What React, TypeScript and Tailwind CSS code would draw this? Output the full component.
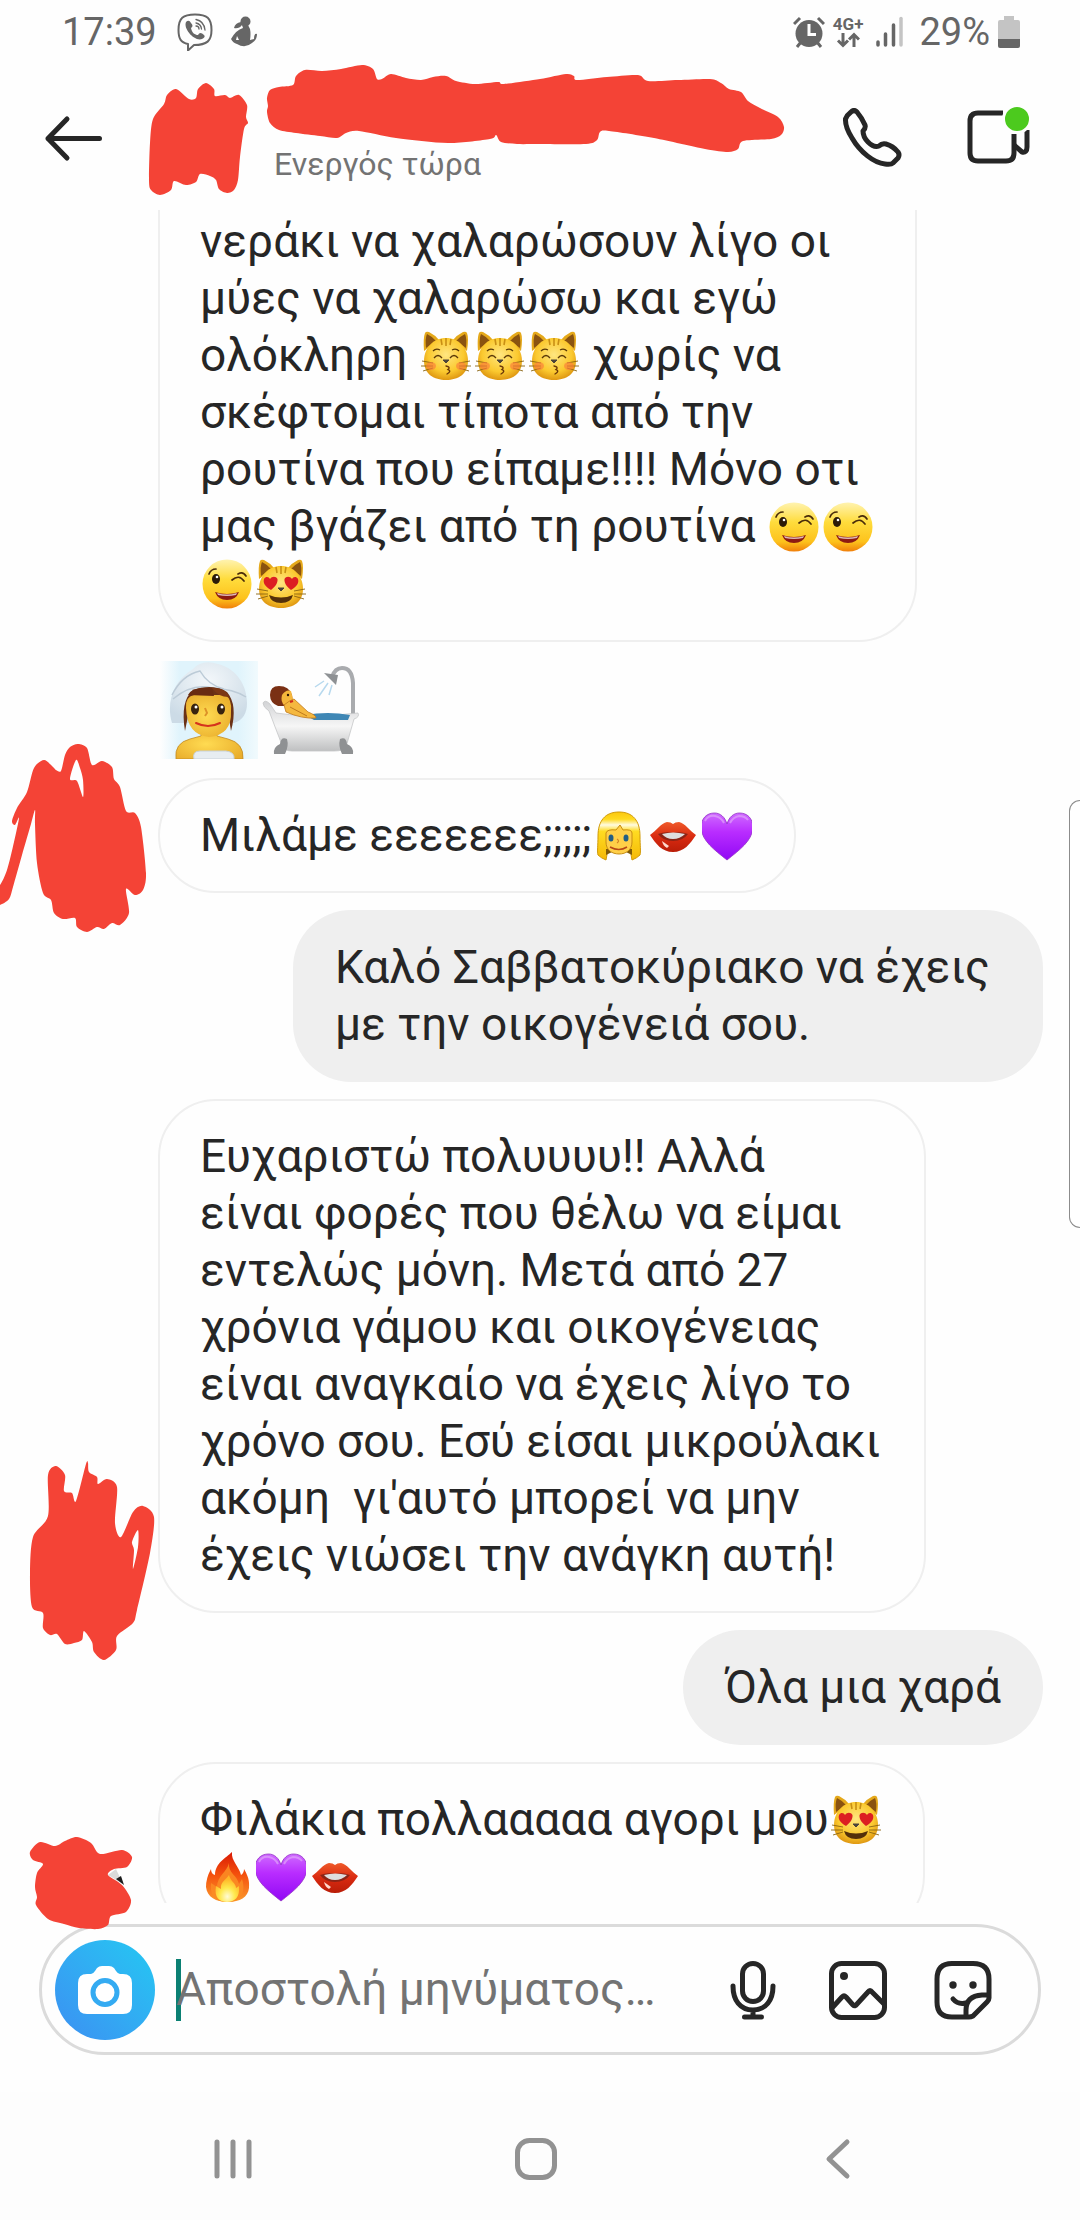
import type { ReactNode } from 'react';

type Point = [number, number];

interface Message {
  from: 'me' | 'them';
  text: string;
  clippedTop?: boolean;
}

const messages: Message[] = [
  {
    from: 'them',
    text: 'νεράκι να χαλαρώσουν λίγο οι\nμύες να χαλαρώσω και εγώ\nολόκληρη 😽😽😽 χωρίς να\nσκέφτομαι τίποτα από την\nρουτίνα που είπαμε!!!! Μόνο οτι\nμας βγάζει από τη ρουτίνα 😉😉\n😉😻',
    clippedTop: true,
  },
  { from: 'them', text: '🧖🛀' },
  { from: 'them', text: 'Μιλάμε εεεεεεε;;;;;👱👄💜' },
  { from: 'me', text: 'Καλό Σαββατοκύριακο να έχεις με την οικογένειά σου.' },
  {
    from: 'them',
    text: "Ευχαριστώ πολυυυυ!! Αλλά\nείναι φορές που θέλω να είμαι εντελώς μόνη. Μετά από 27 χρόνια γάμου και οικογένειας είναι αναγκαίο να έχεις λίγο το χρόνο σου. Εσύ είσαι μικρούλακι ακόμη  γι'αυτό μπορεί να μην έχεις νιώσει την ανάγκη αυτή!",
  },
  { from: 'me', text: 'Όλα μια χαρά' },
  { from: 'them', text: 'Φιλάκια πολλααααα αγορι μου😻\n🔥💜👄' },
];

/* ---------- emoji ---------- */

function EmojiDefs() {
  return (
    <svg className="absolute h-0 w-0" aria-hidden="true">
      <defs>
        <radialGradient id="cat" cx="50%" cy="40%" r="62%">
          <stop offset="0" stopColor="#ffe680" />
          <stop offset="0.65" stopColor="#fbc92f" />
          <stop offset="1" stopColor="#dd9410" />
        </radialGradient>
        <linearGradient id="face" x1="0" y1="0" x2="0" y2="1">
          <stop offset="0" stopColor="#fff3b0" />
          <stop offset="0.4" stopColor="#ffdc3c" />
          <stop offset="0.8" stopColor="#fdc21c" />
          <stop offset="1" stopColor="#f07f0a" />
        </linearGradient>
        <linearGradient id="purple" x1="0" y1="0" x2="0" y2="1">
          <stop offset="0" stopColor="#cf6bff" />
          <stop offset="0.4" stopColor="#b92dff" />
          <stop offset="1" stopColor="#9108f5" />
        </linearGradient>
        <linearGradient id="hair" x1="0" y1="0" x2="0" y2="1">
          <stop offset="0" stopColor="#fbc80f" />
          <stop offset="0.15" stopColor="#ffd91f" />
          <stop offset="0.27" stopColor="#fffbe0" />
          <stop offset="0.4" stopColor="#ffdc22" />
          <stop offset="1" stopColor="#f5b806" />
        </linearGradient>
        <linearGradient id="flame" x1="0" y1="0" x2="0" y2="1">
          <stop offset="0" stopColor="#d91a05" />
          <stop offset="0.45" stopColor="#f4500d" />
          <stop offset="1" stopColor="#fb9a2d" />
        </linearGradient>
        <radialGradient id="flameCore" cx="50%" cy="80%" r="65%">
          <stop offset="0" stopColor="#fffbd6" />
          <stop offset="0.5" stopColor="#ffe94d" />
          <stop offset="1" stopColor="#ffb727" />
        </radialGradient>
        <linearGradient id="lip" x1="0" y1="0" x2="0" y2="1">
          <stop offset="0" stopColor="#ef5a2a" />
          <stop offset="0.5" stopColor="#d92a10" />
          <stop offset="1" stopColor="#b91d08" />
        </linearGradient>
        <linearGradient id="tub" x1="0" y1="0" x2="0" y2="1">
          <stop offset="0" stopColor="#d2d3d5" />
          <stop offset="0.5" stopColor="#f6f6f6" />
          <stop offset="1" stopColor="#bfc0c1" />
        </linearGradient>
        <linearGradient id="steam" x1="0" y1="0" x2="1" y2="0">
          <stop offset="0" stopColor="#fefefe" />
          <stop offset="0.2" stopColor="#e0f4fc" />
          <stop offset="0.8" stopColor="#e0f4fc" />
          <stop offset="1" stopColor="#f1fafd" />
        </linearGradient>
        <radialGradient id="towel" cx="50%" cy="30%" r="70%">
          <stop offset="0" stopColor="#f3f7fa" />
          <stop offset="1" stopColor="#ccdbe6" />
        </radialGradient>
        <radialGradient id="skin" cx="45%" cy="50%" r="65%">
          <stop offset="0" stopColor="#ffdb52" />
          <stop offset="1" stopColor="#e9ad2b" />
        </radialGradient>
      </defs>
    </svg>
  );
}

function InlineEmoji({ label, children }: { label: string; children: ReactNode }) {
  return (
    <svg
      viewBox="0 0 50 50"
      role="img"
      aria-label={label}
      className="mx-0.5 -mt-2 inline-block h-[50px] w-[50px] align-[-10px]"
    >
      {children}
    </svg>
  );
}

function CatHead() {
  return (
    <>
      <path d="M3 20Q2 7 4 2Q5 0 8 1Q14 4 18 9ZM46 20Q48 7 46 2Q45 0 42 1Q36 4 32 9Z" fill="#e5a91b" />
      <path d="M5 17Q4 7 6 3Q12 6 15 10ZM45 17Q46 7 44 3Q38 6 35 10Z" fill="#8a5310" />
      <path d="M25 7C38 7 47 17 47 30C47 43 37 49 25 49S3 43 3 30C3 17 12 7 25 7Z" fill="url(#cat)" />
      <path d="M25 7V15M20 8L21 14M30 8L29 14" stroke="#c98f14" strokeWidth="1.6" fill="none" />
      <path d="M1 30L12 32M0 35L12 35M2 40L12 37M49 30L38 32M50 35L38 35M48 40L38 37" stroke="#8a6412" strokeWidth="0.9" />
    </>
  );
}

function KissingCat() {
  return (
    <InlineEmoji label="😽">
      <CatHead />
      <ellipse cx="10" cy="35" rx="5" ry="4" fill="#fb7c3c" opacity="0.65" />
      <ellipse cx="40" cy="35" rx="5" ry="4" fill="#fb7c3c" opacity="0.65" />
      <path d="M12 20Q15 17 19 19M38 20Q35 17 31 19M13 27Q17 22 21 27M29 27Q33 22 37 27" stroke="#5b3a08" strokeWidth="1.3" fill="none" />
      <path d="M22 29H28L25 32Z" fill="#4c443a" stroke="#4c443a" strokeWidth="1" strokeLinejoin="round" />
      <path d="M25 35Q30 36 27 38.500Q31 40 26 43" stroke="#6b3708" strokeWidth="1.4" fill="none" strokeLinecap="round" />
    </InlineEmoji>
  );
}

function HeartEyesCat() {
  return (
    <InlineEmoji label="😻">
      <CatHead />
      <path d="M15 31C8 27 7 23 8 20C10 17 13 18 14 20C16 17 20 17 21.500 20C22 24 19 28 15 31Z" fill="#dc1f22" />
      <path d="M35 31C42 27 43 23 42 20C40 17 37 18 36 20C34 17 30 17 28.500 20C28 24 31 28 35 31Z" fill="#dc1f22" />
      <path d="M22 29H28L25 32Z" fill="#4c443a" stroke="#4c443a" strokeWidth="1" strokeLinejoin="round" />
      <path d="M13 36Q25 41 37 36Q35 44 25 44T13 36Z" fill="#54300a" />
    </InlineEmoji>
  );
}

function Wink() {
  return (
    <InlineEmoji label="😉">
      <circle cx="25" cy="25" r="24.500" fill="url(#face)" />
      <ellipse cx="14" cy="20" rx="4" ry="5" fill="#2b1a08" />
      <circle cx="15" cy="18" r="1.300" fill="#fff" />
      <path d="M7 15Q9 10 14 10M36 15Q41 12 44 17M30 21Q37 15 42 22" stroke="#4a2c0a" strokeWidth="1.700" fill="none" strokeLinecap="round" />
      <path d="M13 33Q25 37 37 33Q34 41 25 41T13 33Z" fill="#8d1a12" />
      <path d="M15 34Q25 37 35 34L34 36Q25 38 16 36Z" fill="#fff" opacity="0.700" />
    </InlineEmoji>
  );
}

function Blonde() {
  return (
    <InlineEmoji label="👱">
      <path d="M25 1C39 1 46 10 46 25C46 34 47 41 46 44Q43 47 38 49L36 38H14L12 49Q7 47 4 44C3 41 4 34 4 25C4 10 11 1 25 1Z" fill="url(#hair)" stroke="#d19a08" strokeWidth="1" />
      <path d="M12 38H38V44L32 41H18L12 44Z" fill="#7f5a08" />
      <path d="M12 22Q13 18 22 19L26 14L29 19Q38 18 38 22V31C38 39 32 43 25 43S12 39 12 31Z" fill="#ffcf48" stroke="#c78d12" strokeWidth="1" />
      <ellipse cx="17" cy="27" rx="2.500" ry="3.500" fill="#235d84" />
      <ellipse cx="32" cy="27" rx="2.500" ry="3.500" fill="#235d84" />
      <path d="M23 28Q26 30 23 32" stroke="#d38224" strokeWidth="1.200" fill="none" />
      <path d="M16 36Q25 41 33 36" stroke="#b74718" strokeWidth="1.500" fill="none" />
    </InlineEmoji>
  );
}

function Lips() {
  return (
    <InlineEmoji label="👄">
      <path d="M2 24C8 20 13 12 19 11Q23 11 25 13Q27 11 31 11C37 12 42 20 48 24C42 33 36 41 25 41S8 33 2 24Z" fill="url(#lip)" />
      <path d="M10 23Q18 20 25 22Q32 20 40 23Q35 30 25 30T10 23Z" fill="#8b2416" />
      <path d="M14 23Q25 20 37 23Q32 28 25 28T14 23Z" fill="#dedede" />
      <path d="M14 30L21 35L19 37Q15 35 14 30Z" fill="#ffd9cd" />
    </InlineEmoji>
  );
}

function PurpleHeart() {
  return (
    <InlineEmoji label="💜">
      <path d="M25 49C12 39 -1 30 -2 17C-2 7 4 2 12 2C18 2 23 6 25 13C27 6 32 2 38 2C46 2 52 7 52 17C51 30 38 39 25 49Z" fill="url(#purple)" stroke="#9130c4" strokeWidth="0.800" transform="translate(1 0) scale(0.960 1)" />
      <path d="M3 10Q6 4 13 5Q19 6 22 12M28 12Q31 6 37 5Q43 5 46 9" stroke="#dfa2fa" strokeWidth="2" fill="none" opacity="0.700" />
    </InlineEmoji>
  );
}

function Fire() {
  return (
    <InlineEmoji label="🔥">
      <path d="M30 0C29 9 37 14 39 23Q42 21 42 17C48 27 47 32 47 36C46 45 38 50 26 50S5 45 4 35Q4 26 9 17Q9 22 13 23C13 11 24 6 30 0Z" fill="url(#flame)" />
      <path d="M27 11C26 21 35 23 37 32Q39 29 40 27C44 39 40 50 26 50S8 43 9 31Q12 33 15 35C15 24 25 20 27 11Z" fill="#fb8b24" opacity="0.900" />
      <path d="M27 23C28 29 34 31 34 36L37 34C38 45 33 50 25 50S12 45 14 34L19 37C18 30 24 28 27 23Z" fill="url(#flameCore)" />
    </InlineEmoji>
  );
}

function SteamRoom() {
  return (
    <svg viewBox="0 0 98 98" role="img" aria-label="🧖" className="h-[98px] w-[98px]">
      <rect width="98" height="98" fill="url(#steam)" />
      <path d="M12 62C6 42 13 20 33 8Q42 -2 58 3C78 8 87 26 87 42Q87 58 74 62Z" fill="url(#towel)" />
      <path d="M12 34Q22 14 40 10Q48 24 64 28M13 38Q32 22 52 27Q74 28 86 36" stroke="#bccbd7" strokeWidth="1.500" fill="none" />
      <path d="M25 70Q20 40 33 29Q52 22 67 31Q78 44 71 70Q69 58 68 50H29Z" fill="#6b3216" />
      <path d="M16 98Q14 82 30 78L41 75V68H57V75L68 78Q84 82 83 98Z" fill="url(#skin)" stroke="#c18a25" strokeWidth="0.800" />
      <path d="M26 47Q25 36 34 34H65Q72 38 71 50Q72 74 49 76Q27 74 26 47Z" fill="url(#skin)" />
      <path d="M28 34Q32 25 52 27L54 35Z" fill="#692c12" />
      <path d="M52 27Q66 26 69 36Q58 36 52 27Z" fill="#7b3715" />
      <ellipse cx="35" cy="48" rx="4" ry="5.500" fill="#38230f" />
      <ellipse cx="61" cy="48" rx="4" ry="5.500" fill="#38230f" />
      <circle cx="36" cy="46" r="1.500" fill="#fff" />
      <circle cx="62" cy="46" r="1.500" fill="#fff" />
      <path d="M45 47L47 52L45 55" stroke="#dd9228" strokeWidth="2" fill="none" />
      <path d="M36 62Q48 68 60 62" stroke="#d5331d" strokeWidth="2" fill="none" strokeLinecap="round" />
      <path d="M34 98Q32 90 40 90H66Q75 91 74 98Z" fill="#e7edf1" stroke="#c8d1d8" />
    </svg>
  );
}

function Bath() {
  return (
    <svg viewBox="0 0 98 98" role="img" aria-label="🛀" className="h-[98px] w-[98px]">
      <path d="M91 54V22Q90 7 80 7Q73 7 70 16" stroke="#a9abae" strokeWidth="4" fill="none" />
      <path d="M62 12L76 14L74 24Z" fill="#8e9194" />
      <path d="M62 20L53 26M66 22L57 35M70 24L67 34" stroke="#b7d9ee" strokeWidth="1.500" />
      <path d="M1 42Q3 38 8 43L14 52Q40 56 74 54L96 52Q98 56 92 58L84 86Q82 90 72 90H30Q22 90 20 84L7 50Q1 46 1 42Z" fill="url(#tub)" stroke="#c5c6c8" strokeWidth="0.800" />
      <path d="M43 54Q66 50 88 54L86 59H52Z" fill="#3f87b5" />
      <path d="M8 34Q8 25 17 25Q27 25 30 34Q32 42 24 45H16Q8 42 8 34Z" fill="#7a3014" />
      <path d="M20 34Q24 28 29 30L31 38Q30 45 23 45Q18 41 20 34Z" fill="#f5b63b" />
      <path d="M22 44Q28 39 32 38L46 51Q54 54 54 57Q40 58 24 51Z" fill="#f5b83f" stroke="#bf791d" strokeWidth="0.800" />
      <path d="M28 46L45 55" stroke="#bf791d" />
      <circle cx="26" cy="34" r="1.200" fill="#2f1708" />
      <path d="M28 41L31 40" stroke="#d32b1c" strokeWidth="2" />
      <path d="M12 93Q11 86 18 83Q19 75 25 78Q27 85 23 93ZM91 93Q92 86 85 83Q84 75 78 78Q76 85 80 93Z" fill="#8f9193" />
    </svg>
  );
}

function renderLine(line: string) {
  return Array.from(line).reduce<ReactNode[]>((parts, char, i) => {
    switch (char) {
      case '😽':
        parts.push(<KissingCat key={i} />);
        break;
      case '😻':
        parts.push(<HeartEyesCat key={i} />);
        break;
      case '😉':
        parts.push(<Wink key={i} />);
        break;
      case '👱':
        parts.push(<Blonde key={i} />);
        break;
      case '👄':
        parts.push(<Lips key={i} />);
        break;
      case '💜':
        parts.push(<PurpleHeart key={i} />);
        break;
      case '🔥':
        parts.push(<Fire key={i} />);
        break;
      default: {
        const last = parts.length - 1;
        if (typeof parts[last] === 'string') parts[last] = `${parts[last]}${char}`;
        else parts.push(char);
      }
    }
    return parts;
  }, []);
}

function renderText(text: string) {
  return text.split('\n').map((line, i) => (
    <span key={i} className="block">
      {renderLine(line)}
    </span>
  ));
}

/* ---------- ink over the names and avatars ---------- */

const ink: Point[][] = [
  // avatar in the header
  [[160, 195], [151, 190], [149, 180], [150, 143], [153, 119], [164, 104], [167, 95], [176, 89], [189, 99], [196, 98], [198, 89], [206, 83], [214, 89], [215, 96], [225, 95], [230, 98], [239, 95], [247, 105], [246, 117], [248, 123], [244, 129], [240, 157], [238, 180], [234, 190], [227, 193], [219, 189], [216, 180], [210, 176], [200, 174], [196, 182], [186, 185], [174, 181], [171, 190]],
  // name
  [[267, 98], [270, 90], [279, 87], [293, 85], [296, 76], [305, 70], [322, 71], [341, 69], [362, 65], [373, 69], [377, 79], [382, 79], [391, 74], [406, 78], [421, 80], [433, 77], [446, 76], [456, 81], [475, 84], [498, 82], [504, 84], [540, 79], [566, 74], [574, 76], [577, 80], [607, 77], [638, 75], [648, 81], [678, 80], [710, 79], [721, 83], [729, 89], [741, 92], [748, 101], [760, 108], [778, 117], [784, 127], [781, 135], [771, 139], [743, 141], [738, 149], [728, 152], [705, 149], [654, 138], [609, 131], [600, 132], [597, 140], [586, 144], [540, 144], [517, 144], [501, 142], [496, 135], [490, 139], [448, 143], [396, 138], [359, 131], [346, 133], [337, 138], [320, 136], [296, 133], [279, 130], [270, 123], [267, 112], [268, 106]],
  // avatars beside the messages
  [[-6, 886], [0, 885], [7, 870], [14, 842], [19, 818], [15, 825], [12, 821], [17, 808], [27, 792], [34, 768], [44, 760], [53, 767], [56, 770], [61, 771], [65, 755], [70, 747], [78, 744], [87, 748], [92, 765], [102, 761], [112, 767], [114, 779], [120, 787], [126, 811], [135, 813], [141, 827], [146, 873], [143, 890], [135, 895], [126, 889], [129, 913], [120, 925], [112, 923], [104, 929], [97, 927], [87, 932], [77, 927], [75, 918], [63, 919], [54, 913], [51, 900], [43, 893], [37, 863], [35, 824], [35, 810], [31, 824], [22, 855], [13, 887], [9, 899], [0, 905], [-6, 905]],
  [[48, 1475], [56, 1466], [65, 1475], [64, 1491], [72, 1493], [76, 1501], [86, 1464], [88, 1463], [89, 1472], [97, 1477], [98, 1484], [107, 1479], [117, 1487], [115, 1523], [121, 1537], [133, 1512], [143, 1506], [154, 1517], [150, 1553], [137, 1610], [133, 1623], [117, 1636], [116, 1650], [104, 1660], [94, 1652], [92, 1642], [84, 1631], [82, 1640], [74, 1643], [65, 1644], [57, 1634], [50, 1635], [43, 1628], [43, 1613], [32, 1607], [30, 1573], [33, 1537], [48, 1516]],
  [[30, 1852], [40, 1842], [55, 1846], [65, 1841], [77, 1837], [91, 1843], [100, 1854], [122, 1850], [132, 1857], [127, 1867], [114, 1869], [108, 1875], [122, 1885], [131, 1900], [126, 1912], [111, 1916], [108, 1925], [98, 1929], [79, 1928], [64, 1924], [48, 1919], [36, 1905], [37, 1897], [35, 1887], [37, 1873], [43, 1864], [33, 1860]],
];

const inkGaps: Point[][] = [
  [[76, 760], [70, 779], [77, 781], [83, 797], [83, 780], [80, 768]],
  [[138, 1530], [132, 1542], [134, 1550], [133, 1569], [138, 1547]],
];

// closed Catmull-Rom curve through the given points
function smooth(points: Point[]) {
  const n = points.length;
  let d = `M${points[0][0]} ${points[0][1]}`;
  for (let i = 0; i < n; i++) {
    const a = points[(i + n - 1) % n];
    const b = points[i];
    const c = points[(i + 1) % n];
    const e = points[(i + 2) % n];
    d += `C${b[0] + (c[0] - a[0]) / 7} ${b[1] + (c[1] - a[1]) / 7} ${c[0] - (e[0] - b[0]) / 7} ${c[1] - (e[1] - b[1]) / 7} ${c[0]} ${c[1]}`;
  }
  return `${d}Z`;
}

function InkLayer() {
  return (
    <svg viewBox="0 0 1080 2220" aria-hidden="true" className="pointer-events-none absolute left-0 top-0 w-full">
      <path d="M108 1875L116 1869L123 1884Z" fill="#dadada" />
      <path d="M116 1879L121 1876L124 1885Z" fill="#1c1c1c" />
      <path d={[...ink, ...inkGaps].map(smooth).join('')} fill="#f44336" fillRule="evenodd" />
    </svg>
  );
}

/* ---------- bars ---------- */

function StatusBar() {
  return (
    <div className="flex h-16 shrink-0 items-center justify-between pl-[62px] pr-[60px] text-[38px] leading-[44px] text-[#666666]">
      <div className="flex items-center">
        <span>17:39</span>
        <svg viewBox="0 0 36 38" className="ml-5 h-[38px] w-9" fill="none" aria-hidden="true">
          <path d="M18 1.500C30 1.500 34.500 5 34.500 17C34.500 28 30 32 17 32L11 37.500V31C4 29.500 1.500 26 1.500 17C1.500 5 6 1.500 18 1.500Z" stroke="#666" strokeWidth="2" strokeLinejoin="round" />
          <path d="M9 9Q12 6 14 10Q17 13 14 15C15 20 18 22 21 22Q23 18 27 22Q29 24 25 26C18 29 6 16 9 9Z" fill="#666" />
          <path d="M19 6.500Q27 8 28 17M19 10Q24 11 24.500 16M19 13Q22 13 22 16" stroke="#666" strokeWidth="1.300" strokeLinecap="round" />
        </svg>
        <svg viewBox="0 0 26 32" className="ml-[18px] h-8 w-[26px]" aria-hidden="true">
          <circle cx="14.500" cy="5.500" r="5" fill="#666" />
          <path d="M10 6Q4 7 3 12Q8 13 11 9L12 12Q5 14 0 23Q2 27 6 28Q14 33 21 27Q26 24 26 18Q23 17 23 23L19 24Q20 18 19 13L17 9ZM6 20L8 24H5Z" fill="#666" fillRule="evenodd" />
        </svg>
      </div>
      <div className="flex items-center">
        <svg viewBox="0 0 32 32" className="h-8 w-8" aria-hidden="true">
          <circle cx="16" cy="17.500" r="13.500" fill="#666" />
          <path d="M1 8L7 2M31 8L25 2M4 31L8 26M28 31L24 26" stroke="#666" strokeWidth="3" />
          <path d="M16 8V18.500H23" stroke="#fff" strokeWidth="3" fill="none" />
        </svg>
        <div className="ml-2 flex flex-col items-center">
          <span className="text-[17px] font-bold leading-4">4G+</span>
          <svg viewBox="0 0 24 16" className="h-4 w-6" fill="none" stroke="#666" strokeWidth="3" aria-hidden="true">
            <path d="M7 1V13M2 8.500L7 13.500L12 8.500M18 15V3M13 7.500L18 2.500L23 7.500" />
          </svg>
        </div>
        <svg viewBox="0 0 28 32" className="ml-3 h-8 w-7" strokeWidth="3.500" strokeLinecap="round" aria-hidden="true">
          <path d="M3 26V29M10.500 18V29M18.500 9V29" stroke="#666" />
          <path d="M26 2.500V29" stroke="#c4c4c4" />
        </svg>
        <span className="ml-4">29%</span>
        <svg viewBox="0 0 22 34" className="ml-2 h-[34px] w-[22px]" aria-hidden="true">
          <path d="M6 1H16V5H20Q22 5 22 7V25H0V7Q0 5 2 5H6Z" fill="#c4c4c4" />
          <path d="M0 24H22V31Q22 33 20 33H2Q0 33 0 31Z" fill="#666" />
        </svg>
      </div>
    </div>
  );
}

function Header() {
  return (
    <header className="flex h-[146px] shrink-0 items-center pl-11 pr-12 pt-0.5">
      <button type="button" aria-label="Πίσω">
        <svg viewBox="0 0 58 48" className="h-12 w-[58px]" fill="none" stroke="#262626" strokeWidth="5" strokeLinecap="round" strokeLinejoin="round">
          <path d="M23 5L4 24.500L23 44M4 24.500H55.500" />
        </svg>
      </button>
      <p className="ml-[172px] flex-1 self-end pb-[26px] text-[32px] leading-10 text-[#737373]">Ενεργός τώρα</p>
      <button type="button" aria-label="Κλήση">
        <svg viewBox="0 0 60 60" className="h-[60px] w-[60px]" fill="none" stroke="#262626" strokeWidth="5" strokeLinejoin="round">
          <path d="M9 4Q12 1 15 4Q20 10 23 17Q24 20 21 23Q21 29 26 34Q32 40 37 38Q40 35 44 36Q51 38 56 44Q58 47 56 50L51 55Q49 57 43 56C32 55 18 44 10 30Q3 19 3.500 11Q5 7 9 4Z" />
        </svg>
      </button>
      <button type="button" aria-label="Βιντεοκλήση" className="relative ml-16">
        <svg viewBox="0 0 66 60" className="h-[60px] w-[66px]" fill="none" stroke="#262626" strokeWidth="5" strokeLinejoin="round">
          <path d="M37 5H12Q4 5 4 13V45Q4 53 12 53H40Q48 53 48 45V26" />
          <path d="M48 37L56 44Q61 45 61 39V22" />
        </svg>
        <span className="absolute -top-1 right-0 h-[30px] w-[30px] rounded-full border-[3px] border-[#fefefe] bg-[#4cca1e]"></span>
      </button>
    </header>
  );
}

function Bubble({ message }: { message: Message }) {
  if (message.text === '🧖🛀') {
    return (
      <div className="ml-[160px] flex h-[102px] shrink-0 items-center gap-1">
        <SteamRoom />
        <Bath />
      </div>
    );
  }

  if (message.from === 'me') {
    return (
      <p className="mr-[37px] max-w-[750px] self-end whitespace-pre-wrap rounded-[58px] bg-[#efefef] px-[42px] py-[29px]">
        {renderText(message.text)}
      </p>
    );
  }

  return (
    <p
      className={`ml-[158px] max-w-[768px] self-start whitespace-pre-wrap border-2 border-[#efefef] px-10 ${
        message.clippedTop ? 'rounded-b-[58px] border-t-0 pb-7 pt-[3px]' : 'rounded-[58px] py-[27px]'
      }`}
    >
      {renderText(message.text)}
    </p>
  );
}

function Composer() {
  return (
    <form className="mx-[39px] mb-[37px] mt-[21px] flex h-[131px] shrink-0 items-center rounded-full border-[3px] border-[#dbdbdb] pl-[13px] pr-[45px]">
      <button
        type="button"
        aria-label="Κάμερα"
        className="flex h-[100px] w-[100px] shrink-0 items-center justify-center rounded-full bg-linear-to-tr from-[#3b8ff2] to-[#23c8f2]"
      >
        <svg viewBox="0 0 54 48" className="h-12 w-[54px]">
          <path d="M9 8H13Q15 8 17 5L19 2Q21 0 24 0H31Q34 0 36 2L38 5Q40 8 42 8H45Q54 8 54 17V39Q54 48 45 48H9Q0 48 0 39V17Q0 8 9 8Z" fill="#fff" />
          <circle cx="27" cy="26.500" r="12" fill="none" stroke="#34abf2" strokeWidth="5" />
        </svg>
      </button>
      <div className="relative ml-[21px] flex min-w-0 flex-1 items-center">
        <span className="absolute left-0 h-[62px] w-[5px] bg-[#0b8073]"></span>
        <input
          type="text"
          aria-label="Μήνυμα"
          placeholder="Αποστολή μηνύματος…"
          className="relative w-full bg-transparent text-[46px] leading-[57px] outline-none placeholder:text-[#737373]"
        />
      </div>
      <div className="flex items-center gap-[45px]">
        <button type="button" aria-label="Φωνητικό μήνυμα">
          <svg viewBox="0 0 60 60" className="h-[60px] w-[60px]" fill="none" stroke="#262626" strokeWidth="5" strokeLinecap="round">
            <rect x="19.500" y="3.500" width="21" height="38" rx="10.500" />
            <path d="M10 26C10 40 17 50 30 50S50 40 50 26M30 50V57M21.500 57H38.500" />
          </svg>
        </button>
        <button type="button" aria-label="Φωτογραφία">
          <svg viewBox="0 0 60 60" className="h-[60px] w-[60px]" fill="none" stroke="#262626" strokeWidth="5" strokeLinejoin="round">
            <rect x="3.500" y="3.500" width="53" height="54" rx="10" />
            <path d="M4 48L14 37Q16 35 18 37L25 45Q27 47 29 44L40 32Q42 29 44 32L56 44" />
            <circle cx="16" cy="16" r="4" fill="#262626" stroke="none" />
          </svg>
        </button>
        <button type="button" aria-label="Αυτοκόλλητο">
          <svg viewBox="0 0 60 60" className="h-[60px] w-[60px]" fill="none" stroke="#262626" strokeWidth="5" strokeLinejoin="round">
            <path d="M36 57H19Q4 57 4 42V19Q4 3.500 19 3.500H40Q56 3.500 56 19V38Q56 40 54 42L40 56Q38 57 36 57Z" />
            <path d="M56 35H49Q33 36 33 50V57" />
            <path d="M20 39Q25 45 33 43" strokeLinecap="round" />
            <circle cx="20" cy="25" r="3.700" fill="#262626" stroke="none" />
            <circle cx="40" cy="25" r="3.700" fill="#262626" stroke="none" />
          </svg>
        </button>
      </div>
    </form>
  );
}

function NavBar() {
  return (
    <nav className="flex h-32 shrink-0 items-center justify-between bg-[#fdfdfd] pl-[212px] pr-[229px] pt-1.5">
      <button type="button" aria-label="Πρόσφατα">
        <svg viewBox="0 0 42 42" className="h-[42px] w-[42px]" stroke="#929292" strokeWidth="5" strokeLinecap="round">
          <path d="M5 4V38M21 4V38M37 4V38" />
        </svg>
      </button>
      <button type="button" aria-label="Αρχική">
        <svg viewBox="0 0 42 42" className="h-[42px] w-[42px]" fill="none" stroke="#929292" strokeWidth="5">
          <rect x="2.500" y="2.500" width="37" height="37" rx="12" />
        </svg>
      </button>
      <button type="button" aria-label="Επιστροφή" className="pl-2">
        <svg viewBox="0 0 26 42" className="h-[42px] w-[26px]" fill="none" stroke="#929292" strokeWidth="5" strokeLinecap="round" strokeLinejoin="round">
          <path d="M22 4L4 21L22 38" />
        </svg>
      </button>
    </nav>
  );
}

export default function App() {
  return (
    <div className="relative flex h-screen flex-col overflow-hidden bg-[#fefefe] font-['Roboto','Noto_Sans',sans-serif] text-[#262626]">
      <EmojiDefs />
      <StatusBar />
      <Header />

      <main className="flex min-h-0 flex-1 flex-col gap-[17px] overflow-hidden text-[46px] leading-[57px]">
        {messages.map((message, i) => (
          <Bubble key={i} message={message} />
        ))}
      </main>

      <Composer />
      <NavBar />

      {/* edge panel handle */}
      <div className="absolute right-0 top-[800px] h-[428px] w-[11px] rounded-l-xl border border-r-0 border-[#8c8c8c] bg-white"></div>
      <InkLayer />
    </div>
  );
}
